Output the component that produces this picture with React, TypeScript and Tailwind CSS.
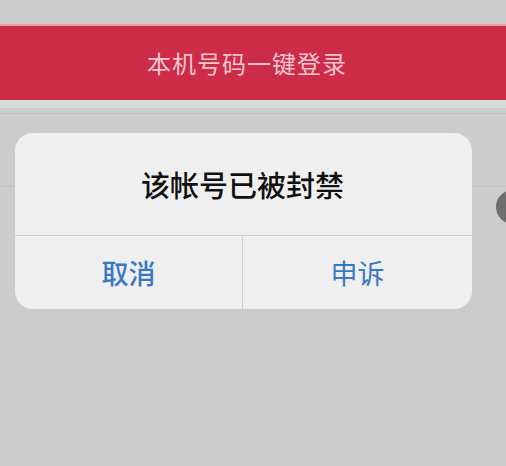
export default function App() {
  const cjk = { fontFamily: '"Noto Sans CJK SC", "Noto Sans", sans-serif' };

  return (
    <div
      className="relative w-[506px] h-[466px] overflow-hidden bg-[#cccccc]"
      style={cjk}
    >
      {/* page behind the alert */}
      <div className="pt-[24px]">
        <div className="h-[2px] bg-[#e8a0aa]" />
        <div className="flex h-[74px] items-center justify-center pr-[12px] bg-[#cc2c47]">
          <span className="text-[24px] leading-none tracking-[1px] text-[#f3c6cd]">
            本机号码一键登录
          </span>
        </div>
        <div className="h-[8px] bg-[#d7dbda]" />
        <div className="h-[5px]" />
        <div className="h-[1px] bg-[#bdbdbd]" />
        <div className="relative h-[73px] border-b border-[#c2c2c2]">
          <div className="absolute right-[-24px] top-[76px] h-[34px] w-[34px] rounded-full bg-[#6e6e6e]" />
        </div>
      </div>

      {/* alert dialog */}
      <div className="absolute left-[15px] top-[133px] w-[457px] overflow-hidden rounded-[18px] bg-[#efefef]">
        <div className="flex h-[102px] items-center justify-center pr-[2px]">
          <span className="text-[29px] font-medium leading-none text-[#111111]">
            该帐号已被封禁
          </span>
        </div>
        <div className="grid h-[74px] grid-cols-[228px_1fr] border-t border-[#cfcfcf]">
          <div className="flex items-center justify-center border-r border-[#cfcfcf] text-[27px] font-medium leading-none text-[#3a78c2]">
            取消
          </div>
          <div className="flex items-center justify-center text-[27px] leading-none text-[#3a78c2]">
            申诉
          </div>
        </div>
      </div>
    </div>
  );
}
